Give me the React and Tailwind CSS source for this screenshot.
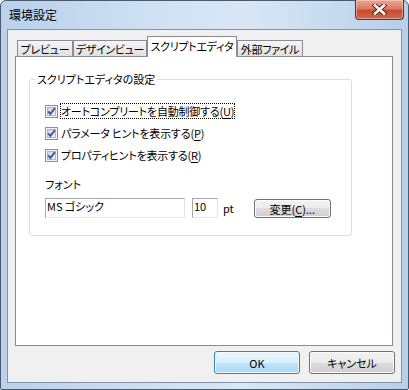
import React from "react";

const FONT = "font-['Noto_Sans_CJK_JP','Noto_Sans',sans-serif] [font-feature-settings:'palt'] text-[11px] leading-[14px] text-black";

function Check() {
  return (
    <svg width="13" height="13" viewBox="0 0 13 13" className="shrink-0">
      <defs>
        <linearGradient id="cbg" x1="0" y1="0" x2="1" y2="1">
          <stop offset="0" stopColor="#cdd1d7" />
          <stop offset="1" stopColor="#f8f8f8" />
        </linearGradient>
      </defs>
      <rect x="0.5" y="0.5" width="12" height="12" fill="#f4f4f4" stroke="#8e8f8f" />
      <rect x="2.5" y="2.5" width="8" height="8" fill="url(#cbg)" stroke="#b2b6bb" />
      <path d="M3.2 6.3 L5.4 8.9 L9.9 3.2" fill="none" stroke="#3b57a3" strokeWidth="1.9" />
    </svg>
  );
}

function CheckRow({ label, mn, focus }) {
  return (
    <div className="flex items-center gap-[2px] h-[16px]">
      <Check />
      <span
        className={
          "h-[16px] border border-dotted whitespace-nowrap tracking-[-0.2px] " +
          (focus ? "border-black" : "border-transparent")
        }
      >
        {label}(<span className="underline underline-offset-2">{mn}</span>)
      </span>
    </div>
  );
}

function Tab({ label, w, active }) {
  if (active) {
    return (
      <div
        className={`relative z-10 -mb-px h-[21px] ${w} flex items-start justify-center pt-[2px] border border-b-0 border-[#898c95] bg-white whitespace-nowrap tracking-[-0.3px]`}
      >
        {label}
      </div>
    );
  }
  return (
    <div
      className={`h-[16px] ${w} flex items-center justify-center border border-b-0 border-[#898c95] bg-gradient-to-b from-[#f6f6f6] to-[#e0e0e0] whitespace-nowrap tracking-[-0.3px]`}
    >
      {label}
    </div>
  );
}

function Button({ children, def, className = "" }) {
  return (
    <div
      className={
        "flex items-center justify-center rounded-[3px] border " +
        (def
          ? "border-[#3c7fb1] bg-[linear-gradient(#eaf6fd_0%,#d9f0fc_50%,#bee6fd_50%,#a7d9f5_100%)] shadow-[inset_0_0_0_1px_#f4fbff]"
          : "border-[#707070] bg-[linear-gradient(#f2f2f2_0%,#ebebeb_50%,#dddddd_50%,#cfcfcf_100%)] shadow-[inset_0_0_0_1px_#fcfcfc]") +
        " " +
        className
      }
    >
      {children}
    </div>
  );
}

export default function App() {
  return (
    <div className={`w-[409px] h-[390px] bg-white ${FONT}`}>
      <div className="w-[409px] h-[390px] flex flex-col rounded-t-[6px] rounded-b-[2px] border border-[#4a5a6c] bg-[linear-gradient(90deg,#b9d1ec_0%,#d3e3f4_45%,#d9e7f5_60%,#b7cfea_100%)]">
        {/* title bar */}
        <div className="h-[28px] flex items-start justify-between shrink-0">
          <div className="ml-[8px] mt-[7px] whitespace-nowrap text-[12px]">環境設定</div>
          <div className="-mt-px mr-[4px] w-[49px] h-[20px] rounded-b-[4px] border border-t-0 border-[#6a2b22] bg-[linear-gradient(#e9a897_0%,#dc7a62_45%,#c84a2e_55%,#cf6a4c_100%)] shadow-[inset_0_0_0_1px_rgba(255,220,210,0.5)] flex items-center justify-center">
            <svg width="15" height="11" viewBox="0 0 15 11">
              <path d="M3 1.5 L12 9.5 M12 1.5 L3 9.5" stroke="#5a2a22" strokeWidth="4.6" strokeLinecap="square" fill="none" />
              <path d="M3 1.5 L12 9.5 M12 1.5 L3 9.5" stroke="#ffffff" strokeWidth="2.6" strokeLinecap="square" fill="none" />
            </svg>
          </div>
        </div>

        {/* client */}
        <div className="flex-1 mx-[6px] mb-[6px] border border-[#8194ab] bg-[#f0f0f0] flex flex-col">
          <div className="flex-1 flex flex-col pl-[7px] pr-[8px] pt-[6px]">
            {/* tabs */}
            <div className="flex items-end ml-[2px] h-[20px] shrink-0">
              <Tab label="プレビュー" w="w-[56px]" />
              <Tab label="デザインビュー" w="w-[74px]" />
              <Tab label="スクリプトエディタ" w="w-[90px]" active />
              <Tab label="外部ファイル" w="w-[66px]" />
            </div>
            {/* panel */}
            <div className="flex-1 border border-[#898c95] bg-white pl-[13px] pt-[22px]">
              <div className="relative w-[323px] rounded-[3px] border border-[#d5dfe5] pl-[15px] pt-[23px] pb-[17px]">
                <div className="absolute left-[5px] -top-[8px] bg-white px-[2px] whitespace-nowrap">
                  スクリプトエディタの設定
                </div>
                <div className="flex flex-col gap-[6px]">
                  <CheckRow label="オートコンプリートを自動制御する" mn="U" focus />
                  <CheckRow label="パラメータ ヒントを表示する" mn="P" />
                  <CheckRow label="プロパティヒントを表示する" mn="R" />
                </div>
                <div className="mt-[14px]">フォント</div>
                <div className="mt-[7px] flex items-start">
                  <div className="w-[140px] h-[20px] border-t border-l border-[#a5a7ad] border-r border-b border-r-[#e2e3ea] border-b-[#e3e9ef] pl-[1px] whitespace-nowrap">
                    MS ゴシック
                  </div>
                  <div className="ml-[7px] w-[26px] h-[20px] border-t border-l border-[#a5a7ad] border-r border-b border-r-[#e2e3ea] border-b-[#e3e9ef] pl-[1px]">
                    10
                  </div>
                  <div className="ml-[5px] h-[20px] flex items-center">pt</div>
                  <Button className="ml-[20px] mt-[1px] w-[77px] h-[19px]">
                    <span>
                      変更(<span className="underline underline-offset-2">C</span>)...
                    </span>
                  </Button>
                </div>
              </div>
            </div>
          </div>
          {/* bottom buttons */}
          <div className="shrink-0 flex justify-end gap-[9px] pr-[6px] pt-[5px] pb-[8px]">
            <Button def className="w-[86px] h-[23px]">OK</Button>
            <Button className="w-[86px] h-[23px]">キャンセル</Button>
          </div>
        </div>
      </div>
    </div>
  );
}
